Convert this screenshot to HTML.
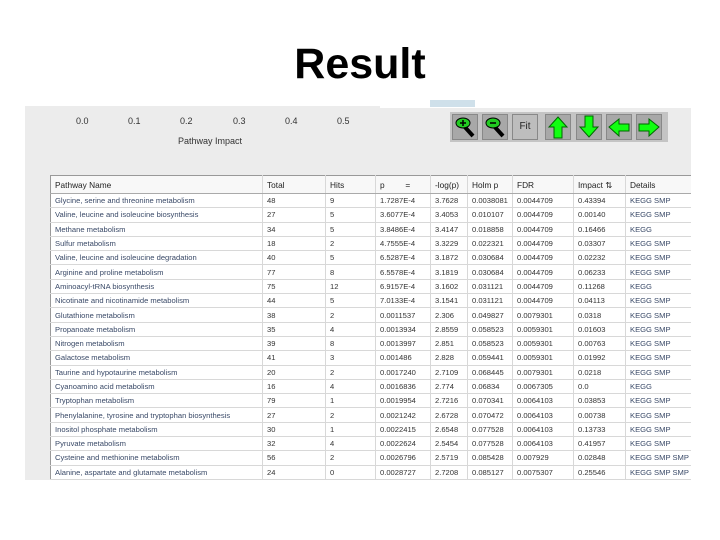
<!DOCTYPE html>
<html><head><meta charset="utf-8"><style>
body{margin:0;width:720px;height:540px;background:#fff;position:relative;overflow:hidden;font-family:"Liberation Sans",sans-serif}
.t{position:absolute;left:0;width:720px;top:40px;text-align:center;font-weight:bold;font-size:43px;color:#000}
.app{position:absolute;left:25px;top:106px;width:666px;height:374px;background:#ececec}
.wt{position:absolute;left:380px;top:100px;width:320px;height:8px;background:#fff}
.lb{position:absolute;left:430px;top:100px;width:45px;height:7px;background:#cfe0ea}
.ax{position:absolute;font-size:9px;color:#333}
.tb{position:absolute;left:450px;top:112px;width:218px;height:30px;background:#c4c4c4}
.bt{position:absolute;top:114px;width:26px;height:26px;background:#a8a8a8;border:1px solid #888;box-sizing:border-box}
table{position:absolute;left:50px;top:175px;border-collapse:collapse;background:#fff;font-size:7.6px;color:#3a4a68;table-layout:fixed;width:660px}
td{height:13.3px;padding:0 0 0 4px;border-bottom:1px solid #d8d8d8;border-right:1px solid #d8d8d8;white-space:nowrap;overflow:hidden}
tr.h td{height:17px;color:#222;font-size:8.3px;border-bottom:1px solid #aaa;background:#f8f8f8}
table{border:1px solid #999}
td.n{color:#333}
.clip{position:absolute;left:0;top:0;width:691px;height:480px;overflow:hidden}
</style></head><body>
<div class="t">Result</div>
<div class="app"></div>
<div class="wt"></div><div class="lb"></div>
<div class="ax" style="left:76px;top:116px">0.0</div>
<div class="ax" style="left:128px;top:116px">0.1</div>
<div class="ax" style="left:180px;top:116px">0.2</div>
<div class="ax" style="left:233px;top:116px">0.3</div>
<div class="ax" style="left:285px;top:116px">0.4</div>
<div class="ax" style="left:337px;top:116px">0.5</div>
<div class="ax" style="left:178px;top:136px">Pathway Impact</div>
<div class="tb"></div>
<div class="bt" style="left:452px"><svg width="24" height="24"><line x1="10" y1="10" x2="20" y2="21" stroke="#000" stroke-width="4"/><ellipse cx="10" cy="8" rx="7" ry="5" fill="#2c2" stroke="#000"/><path d="M7 8h6M10 5v6" stroke="#000" stroke-width="1.5"/></svg></div>
<div class="bt" style="left:482px"><svg width="24" height="24"><line x1="10" y1="10" x2="20" y2="21" stroke="#000" stroke-width="4"/><ellipse cx="10" cy="8" rx="7" ry="5" fill="#2c2" stroke="#000"/><path d="M7 8h6" stroke="#000" stroke-width="1.5"/></svg></div>
<div class="bt" style="left:512px;font-size:10px;color:#222;text-align:center;line-height:24px;background:#bdbdbd">Fit</div>
<div class="bt" style="left:545px"><svg width="24" height="24"><path d="M12 2L21 12H16V23H8V12H3Z" fill="#1f1" stroke="#060"/></svg></div>
<div class="bt" style="left:576px"><svg width="24" height="24"><path d="M12 22L21 12H16V1H8V12H3Z" fill="#1f1" stroke="#060"/></svg></div>
<div class="bt" style="left:606px"><svg width="24" height="24"><path d="M2 12L12 4V9H22V16H12V21Z" fill="#1f1" stroke="#060"/></svg></div>
<div class="bt" style="left:636px"><svg width="24" height="24"><path d="M22 12L12 4V9H2V16H12V21Z" fill="#1f1" stroke="#060"/></svg></div>
<div class="clip">
<table>
<colgroup><col style="width:212px"><col style="width:63px"><col style="width:50px"><col style="width:55px"><col style="width:37px"><col style="width:45px"><col style="width:61px"><col style="width:52px"><col style="width:85px"></colgroup>
<tr class="h"><td>Pathway Name</td><td>Total</td><td>Hits</td><td>p &nbsp; &nbsp; &nbsp; &nbsp; =</td><td>-log(p)</td><td>Holm p</td><td>FDR</td><td>Impact ⇅</td><td>Details</td></tr>
<tr><td>Glycine, serine and threonine metabolism</td><td class="n">48</td><td class="n">9</td><td class="n">1.7287E-4</td><td class="n">3.7628</td><td class="n">0.0038081</td><td class="n">0.0044709</td><td class="n">0.43394</td><td>KEGG SMP</td></tr>
<tr><td>Valine, leucine and isoleucine biosynthesis</td><td class="n">27</td><td class="n">5</td><td class="n">3.6077E-4</td><td class="n">3.4053</td><td class="n">0.010107</td><td class="n">0.0044709</td><td class="n">0.00140</td><td>KEGG SMP</td></tr>
<tr><td>Methane metabolism</td><td class="n">34</td><td class="n">5</td><td class="n">3.8486E-4</td><td class="n">3.4147</td><td class="n">0.018858</td><td class="n">0.0044709</td><td class="n">0.16466</td><td>KEGG</td></tr>
<tr><td>Sulfur metabolism</td><td class="n">18</td><td class="n">2</td><td class="n">4.7555E-4</td><td class="n">3.3229</td><td class="n">0.022321</td><td class="n">0.0044709</td><td class="n">0.03307</td><td>KEGG SMP</td></tr>
<tr><td>Valine, leucine and isoleucine degradation</td><td class="n">40</td><td class="n">5</td><td class="n">6.5287E-4</td><td class="n">3.1872</td><td class="n">0.030684</td><td class="n">0.0044709</td><td class="n">0.02232</td><td>KEGG SMP</td></tr>
<tr><td>Arginine and proline metabolism</td><td class="n">77</td><td class="n">8</td><td class="n">6.5578E-4</td><td class="n">3.1819</td><td class="n">0.030684</td><td class="n">0.0044709</td><td class="n">0.06233</td><td>KEGG SMP</td></tr>
<tr><td>Aminoacyl-tRNA biosynthesis</td><td class="n">75</td><td class="n">12</td><td class="n">6.9157E-4</td><td class="n">3.1602</td><td class="n">0.031121</td><td class="n">0.0044709</td><td class="n">0.11268</td><td>KEGG</td></tr>
<tr><td>Nicotinate and nicotinamide metabolism</td><td class="n">44</td><td class="n">5</td><td class="n">7.0133E-4</td><td class="n">3.1541</td><td class="n">0.031121</td><td class="n">0.0044709</td><td class="n">0.04113</td><td>KEGG SMP</td></tr>
<tr><td>Glutathione metabolism</td><td class="n">38</td><td class="n">2</td><td class="n">0.0011537</td><td class="n">2.306</td><td class="n">0.049827</td><td class="n">0.0079301</td><td class="n">0.0318</td><td>KEGG SMP</td></tr>
<tr><td>Propanoate metabolism</td><td class="n">35</td><td class="n">4</td><td class="n">0.0013934</td><td class="n">2.8559</td><td class="n">0.058523</td><td class="n">0.0059301</td><td class="n">0.01603</td><td>KEGG SMP</td></tr>
<tr><td>Nitrogen metabolism</td><td class="n">39</td><td class="n">8</td><td class="n">0.0013997</td><td class="n">2.851</td><td class="n">0.058523</td><td class="n">0.0059301</td><td class="n">0.00763</td><td>KEGG SMP</td></tr>
<tr><td>Galactose metabolism</td><td class="n">41</td><td class="n">3</td><td class="n">0.001486</td><td class="n">2.828</td><td class="n">0.059441</td><td class="n">0.0059301</td><td class="n">0.01992</td><td>KEGG SMP</td></tr>
<tr><td>Taurine and hypotaurine metabolism</td><td class="n">20</td><td class="n">2</td><td class="n">0.0017240</td><td class="n">2.7109</td><td class="n">0.068445</td><td class="n">0.0079301</td><td class="n">0.0218</td><td>KEGG SMP</td></tr>
<tr><td>Cyanoamino acid metabolism</td><td class="n">16</td><td class="n">4</td><td class="n">0.0016836</td><td class="n">2.774</td><td class="n">0.06834</td><td class="n">0.0067305</td><td class="n">0.0</td><td>KEGG</td></tr>
<tr><td>Tryptophan metabolism</td><td class="n">79</td><td class="n">1</td><td class="n">0.0019954</td><td class="n">2.7216</td><td class="n">0.070341</td><td class="n">0.0064103</td><td class="n">0.03853</td><td>KEGG SMP</td></tr>
<tr><td>Phenylalanine, tyrosine and tryptophan biosynthesis</td><td class="n">27</td><td class="n">2</td><td class="n">0.0021242</td><td class="n">2.6728</td><td class="n">0.070472</td><td class="n">0.0064103</td><td class="n">0.00738</td><td>KEGG SMP</td></tr>
<tr><td>Inositol phosphate metabolism</td><td class="n">30</td><td class="n">1</td><td class="n">0.0022415</td><td class="n">2.6548</td><td class="n">0.077528</td><td class="n">0.0064103</td><td class="n">0.13733</td><td>KEGG SMP</td></tr>
<tr><td>Pyruvate metabolism</td><td class="n">32</td><td class="n">4</td><td class="n">0.0022624</td><td class="n">2.5454</td><td class="n">0.077528</td><td class="n">0.0064103</td><td class="n">0.41957</td><td>KEGG SMP</td></tr>
<tr><td>Cysteine and methionine metabolism</td><td class="n">56</td><td class="n">2</td><td class="n">0.0026796</td><td class="n">2.5719</td><td class="n">0.085428</td><td class="n">0.007929</td><td class="n">0.02848</td><td>KEGG SMP SMP</td></tr>
<tr><td>Alanine, aspartate and glutamate metabolism</td><td class="n">24</td><td class="n">0</td><td class="n">0.0028727</td><td class="n">2.7208</td><td class="n">0.085127</td><td class="n">0.0075307</td><td class="n">0.25546</td><td>KEGG SMP SMP</td></tr>
</table>
</div>
</body></html>
